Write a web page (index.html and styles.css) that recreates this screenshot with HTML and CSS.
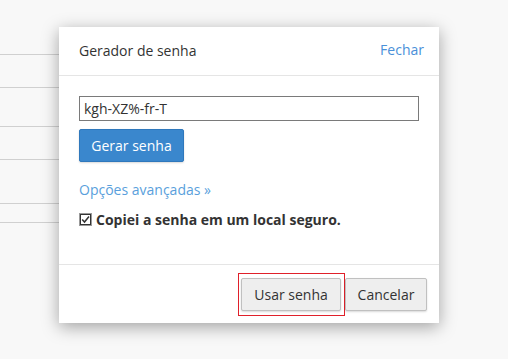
FILE: index.html
```html
<!DOCTYPE html>
<html lang="pt">
<head>
    <meta charset="UTF-8">
    <title>Gerador de senha</title>
    <link rel="stylesheet" href="styles.css">
</head>
<body>
    <div class="page">
        <div class="row r1"></div>
        <div class="row r2"></div>
        <div class="row r3"></div>
        <div class="row r4"></div>
        <div class="row r5"></div>
        <div class="row r6"></div>
    </div>

    <div class="modal">
        <div class="modal-header">
            <span class="title">Gerador de senha</span>
            <a class="close" href="#">Fechar</a>
        </div>
        <div class="modal-body">
            <input class="pass" type="text" value="kgh-XZ%-fr-T">
            <button class="btn primary">Gerar senha</button>
            <a class="advanced" href="#">Opções avançadas »</a>
            <label class="confirm">
                <span class="check">
                    <svg width="13" height="13" viewBox="0 0 13 13">
                        <rect x="0.5" y="0.5" width="12" height="12" fill="#fff" stroke="#333" stroke-dasharray="1 1"/>
                        <rect x="1.5" y="1.5" width="10" height="10" fill="none" stroke="#333"/>
                        <path d="M3.2 6.5 L5.5 9 L10 3.5" fill="none" stroke="#333" stroke-width="1.5"/>
                    </svg>
                </span>
                Copiei a senha em um local seguro.
            </label>
        </div>
        <div class="modal-footer">
            <span class="highlight">
                <button class="btn">Usar senha</button>
            </span>
            <button class="btn">Cancelar</button>
        </div>
    </div>
</body>
</html>
```

FILE: styles.css
```css
body {
    margin: 0;
    background: #f8f8f8;
    font-family: "Open Sans", sans-serif;
    font-size: 14px;
    color: #333;
    height: 359px;
    overflow: hidden;
}

/* rows of the page behind the dialog */
.page {
    width: 80px;
}

.row {
    border-bottom: 1px solid #d0d0d0;
}

.r1 { height: 54px; }
.r2 { height: 32px; }
.r3 { height: 38px; }
.r4 { height: 32px; }
.r5 { height: 43px; }
.r6 { height: 18px; }

.modal {
    position: absolute;
    left: 59px;
    top: 27px;
    width: 380px;
    height: 296px;
    background: #fff;
    box-shadow: 0 4px 16px rgba(0, 0, 0, 0.35);
    display: flex;
    flex-direction: column;
}

.modal-header {
    height: 48px;
    padding: 0 15px 0 20px;
    border-bottom: 1px solid #e5e5e5;
    display: flex;
    align-items: center;
    justify-content: space-between;
}

.title {
    margin-top: -2px;
}

.close {
    color: #4a90d9;
    text-decoration: none;
    margin-top: -4px;
}

.modal-body {
    flex: 1;
    padding: 20px 20px 0;
    display: flex;
    flex-direction: column;
    align-items: flex-start;
}

.pass {
    box-sizing: border-box;
    width: 340px;
    height: 25px;
    margin: 0;
    padding: 0 4px;
    border: 1px solid #7a7a7a;
    font-family: inherit;
    font-size: 14px;
    color: #333;
    outline: none;
}

.btn {
    box-sizing: border-box;
    height: 33px;
    padding: 0;
    border: 1px solid #c0c0c0;
    border-radius: 2px;
    background: #eee;
    font-family: inherit;
    font-size: 14px;
    color: #333;
    white-space: nowrap;
    box-shadow: 0 1px 2px rgba(0, 0, 0, 0.15);
}

.btn.primary {
    margin-top: 8px;
    width: 105px;
    background: #3a87cd;
    border-color: #2f78bc;
    color: #fff;
}

.advanced {
    margin-top: 18px;
    color: #5a9fdc;
    text-decoration: none;
}

.confirm {
    margin-top: 11px;
    display: flex;
    align-items: center;
    gap: 4px;
    font-weight: bold;
}

.check {
    display: flex;
}

.modal-footer {
    height: 58px;
    border-top: 1px solid #e5e5e5;
    padding: 0 12px 0 0;
    display: flex;
    align-items: center;
    justify-content: flex-end;
}

.highlight {
    display: flex;
    padding: 4px 3px 4px 2px;
    border: 1px solid #e0202a;
}

.modal-footer > .btn {
    width: 82px;
}

.highlight .btn {
    width: 100px;
}
```
